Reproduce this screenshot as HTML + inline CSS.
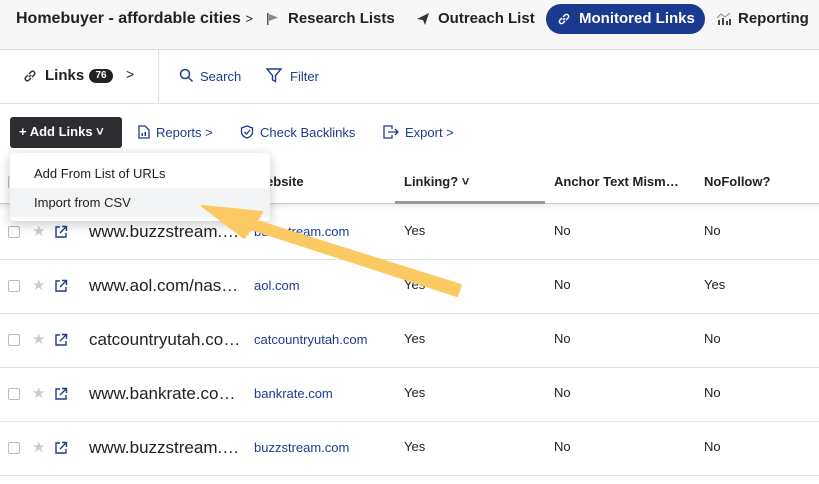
<!DOCTYPE html>
<html><head><meta charset="utf-8"><style>
*{box-sizing:border-box;margin:0;padding:0}
body{width:819px;height:484px;overflow:hidden;background:#fff;font-family:"Liberation Sans",Arial,sans-serif;color:#222;position:relative}
.a{position:absolute;white-space:nowrap}
.top{position:absolute;left:0;top:0;width:819px;height:50px;background:#f7f7f7;border-bottom:1px solid #ddd}
.b{font-weight:bold;font-size:15px}
.blue{color:#1c3d8f}
.hl{position:absolute;left:0;width:819px;height:1px;background:#e3e3e3}
.cb{position:absolute;left:8px;width:12px;height:12px;border:1px solid #bbb;border-radius:2px;background:#fff}
.url{font-size:17px;color:#222}
.td{font-size:13px}
.st{position:absolute;left:32px;color:#ccc;font-size:15px}
</style></head><body>
<div class="top"></div>
<div class="a b" style="left:16px;top:10px;font-size:16px">Homebuyer - affordable cities <span style="font-weight:normal;font-size:13px">&gt;</span></div>
<svg class="a" style="left:266px;top:12px" width="14" height="14"><rect x="1" y="1" width="1.5" height="12" fill="#555"/><path d="M3 2 L12 5.5 L3 9Z" fill="#888"/></svg>
<div class="a b" style="left:288px;top:10px">Research Lists</div>
<svg class="a" style="left:416px;top:12px" width="14" height="14"><path d="M1 7 L13 1 L9 13 L7 8Z" fill="#333"/></svg>
<div class="a b" style="left:438px;top:10px">Outreach List</div>
<div class="a" style="left:546px;top:4px;width:159px;height:30px;border-radius:15px;background:#1a3a8f"></div>
<svg class="a" style="left:557px;top:12px" width="14" height="14"><path d="M6 8 L8 6 M5 6 L3 8 A2 2 0 0 0 6 11 L8 9 M9 8 L11 6 A2 2 0 0 0 8 3 L6 5" stroke="#fff" stroke-width="1.5" fill="none"/></svg>
<div class="a b" style="left:579px;top:10px;color:#fff">Monitored Links</div>
<svg class="a" style="left:716px;top:12px" width="16" height="14"><rect x="2" y="8" width="2" height="5" fill="#444"/><rect x="6" y="6" width="2" height="7" fill="#444"/><rect x="10" y="9" width="2" height="4" fill="#444"/><rect x="13" y="7" width="2" height="6" fill="#444"/><path d="M1 6 L5 2 L9 5 L14 1" stroke="#888" fill="none"/></svg>
<div class="a b" style="left:738px;top:10px">Reporting</div>

<div class="a" style="left:158px;top:50px;width:1px;height:53px;background:#ddd"></div>
<div class="hl" style="top:103px"></div>
<svg class="a" style="left:22px;top:68px" width="16" height="16"><path d="M7 9 L9 7 M6 7 L3.5 9.5 A2.2 2.2 0 0 0 6.5 12.5 L9 10 M10 9 L12.5 6.5 A2.2 2.2 0 0 0 9.5 3.5 L7 6" stroke="#333" stroke-width="1.5" fill="none"/></svg>
<div class="a b" style="left:45px;top:67px">Links</div>
<div class="a" style="left:89px;top:69px;width:24px;height:14px;border-radius:7px;background:#222;color:#fff;font-size:10px;font-weight:bold;text-align:center;line-height:14px">76</div>
<div class="a" style="left:126px;top:66px;font-size:14px">&gt;</div>
<svg class="a" style="left:179px;top:68px" width="15" height="15"><circle cx="6" cy="6" r="4.5" stroke="#1c3d8f" stroke-width="1.5" fill="none"/><path d="M9.5 9.5 L13.5 13.5" stroke="#1c3d8f" stroke-width="1.5"/></svg>
<div class="a blue" style="left:200px;top:69px;font-size:13px">Search</div>
<svg class="a" style="left:266px;top:68px" width="16" height="15"><path d="M1 1 H15 L9.5 7.5 V13.5 L6.5 12 V7.5Z" stroke="#1c3d8f" stroke-width="1.4" fill="none"/></svg>
<div class="a blue" style="left:290px;top:69px;font-size:13px">Filter</div>

<div class="a" style="left:10px;top:117px;width:112px;height:31px;background:#2b2d31;border-radius:3px"></div>
<div class="a b" style="left:19px;top:124px;color:#fff;font-size:13px">+ Add Links ˅</div>
<svg class="a" style="left:138px;top:125px" width="12" height="14"><path d="M1 1 H7 L11 5 V13 H1Z" stroke="#1c3d8f" stroke-width="1.3" fill="none"/><rect x="3.5" y="8" width="1.5" height="3" fill="#1c3d8f"/><rect x="6.5" y="7" width="1.5" height="4" fill="#1c3d8f"/></svg>
<div class="a blue" style="left:156px;top:125px;font-size:13px">Reports &gt;</div>
<svg class="a" style="left:240px;top:125px" width="14" height="14"><path d="M7 1 L12.5 3 V7 C12.5 10 10 12 7 13 C4 12 1.5 10 1.5 7 V3Z" stroke="#1c3d8f" stroke-width="1.3" fill="none"/><path d="M4.5 7 L6.5 9 L10 5" stroke="#1c3d8f" stroke-width="1.3" fill="none"/></svg>
<div class="a blue" style="left:260px;top:125px;font-size:13px">Check Backlinks</div>
<svg class="a" style="left:383px;top:125px" width="16" height="14"><path d="M9 4 V1 H1 V13 H9 V10 M5 7 H15 M12 4 L15 7 L12 10" stroke="#1c3d8f" stroke-width="1.3" fill="none"/></svg>
<div class="a blue" style="left:405px;top:125px;font-size:13px">Export &gt;</div>

<div class="a b" style="left:254px;top:174px;font-size:13px">Website</div>
<div class="a b" style="left:404px;top:174px;font-size:13px">Linking? ˅</div>
<div class="a b" style="left:554px;top:174px;font-size:13px">Anchor Text Mism…</div>
<div class="a b" style="left:704px;top:174px;font-size:13px">NoFollow?</div>
<div class="hl" style="top:203px;background:#d0d0d0"></div>
<div class="a" style="left:395px;top:201px;width:150px;height:3px;background:#9a9a9a"></div>
<div class="a" style="left:0;top:204px;width:819px;height:6px;background:linear-gradient(#eee,#fff)"></div>
<div class="cb" style="top:176px"></div>

<div class="hl" style="top:259px"></div><div class="hl" style="top:313px"></div><div class="hl" style="top:367px"></div><div class="hl" style="top:421px"></div><div class="hl" style="top:475px"></div>

<div class="cb" style="top:226px"></div><div class="cb" style="top:280px"></div><div class="cb" style="top:334px"></div><div class="cb" style="top:388px"></div><div class="cb" style="top:442px"></div>
<div class="st" style="top:222px">★</div>
<div class="st" style="top:276px">★</div>
<div class="st" style="top:330px">★</div>
<div class="st" style="top:384px">★</div>
<div class="st" style="top:438px">★</div>
<svg class="a" style="left:54px;top:225px" width="14" height="230"><g id="e" stroke="#1c3d8f" stroke-width="1.4" fill="none"><path d="M6 2 H2 V12 H12 V8 M8 1.5 H12.5 V6 M12.5 1.5 L6 8"/></g><use href="#e" y="54"/><use href="#e" y="108"/><use href="#e" y="162"/><use href="#e" y="216"/></svg>

<div class="a url" style="left:89px;top:222px">www.buzzstream.…</div>
<div class="a url" style="left:89px;top:276px">www.aol.com/nas…</div>
<div class="a url" style="left:89px;top:330px">catcountryutah.co…</div>
<div class="a url" style="left:89px;top:384px">www.bankrate.co…</div>
<div class="a url" style="left:89px;top:438px">www.buzzstream.…</div>
<div class="a td blue" style="left:254px;top:224px">buzzstream.com</div>
<div class="a td blue" style="left:254px;top:278px">aol.com</div>
<div class="a td blue" style="left:254px;top:332px">catcountryutah.com</div>
<div class="a td blue" style="left:254px;top:386px">bankrate.com</div>
<div class="a td blue" style="left:254px;top:440px">buzzstream.com</div>
<div class="a td" style="left:404px;top:224px;line-height:54px;margin-top:-20px">Yes<br>Yes<br>Yes<br>Yes<br>Yes</div>
<div class="a td" style="left:554px;top:224px;line-height:54px;margin-top:-20px">No<br>No<br>No<br>No<br>No</div>
<div class="a td" style="left:704px;top:224px;line-height:54px;margin-top:-20px">No<br>Yes<br>No<br>No<br>No</div>

<div class="a" style="left:10px;top:153px;width:260px;height:68px;background:#fff;border-radius:4px;box-shadow:0 3px 12px rgba(0,0,0,.22);overflow:hidden">
<div style="position:absolute;left:0;top:35px;width:260px;height:29px;background:#f3f4f6"></div>
<div class="a" style="left:24px;top:13px;font-size:13px">Add From List of URLs</div>
<div class="a" style="left:24px;top:42px;font-size:13px">Import from CSV</div>
</div>

<svg class="a" style="left:0;top:0" width="819" height="484"><polygon points="202,206 262,212 257,221 461,285 457,296 251,229 244,238" fill="#fcc963" stroke="#fcc963" stroke-width="2" stroke-linejoin="round"/></svg>
</body></html>
